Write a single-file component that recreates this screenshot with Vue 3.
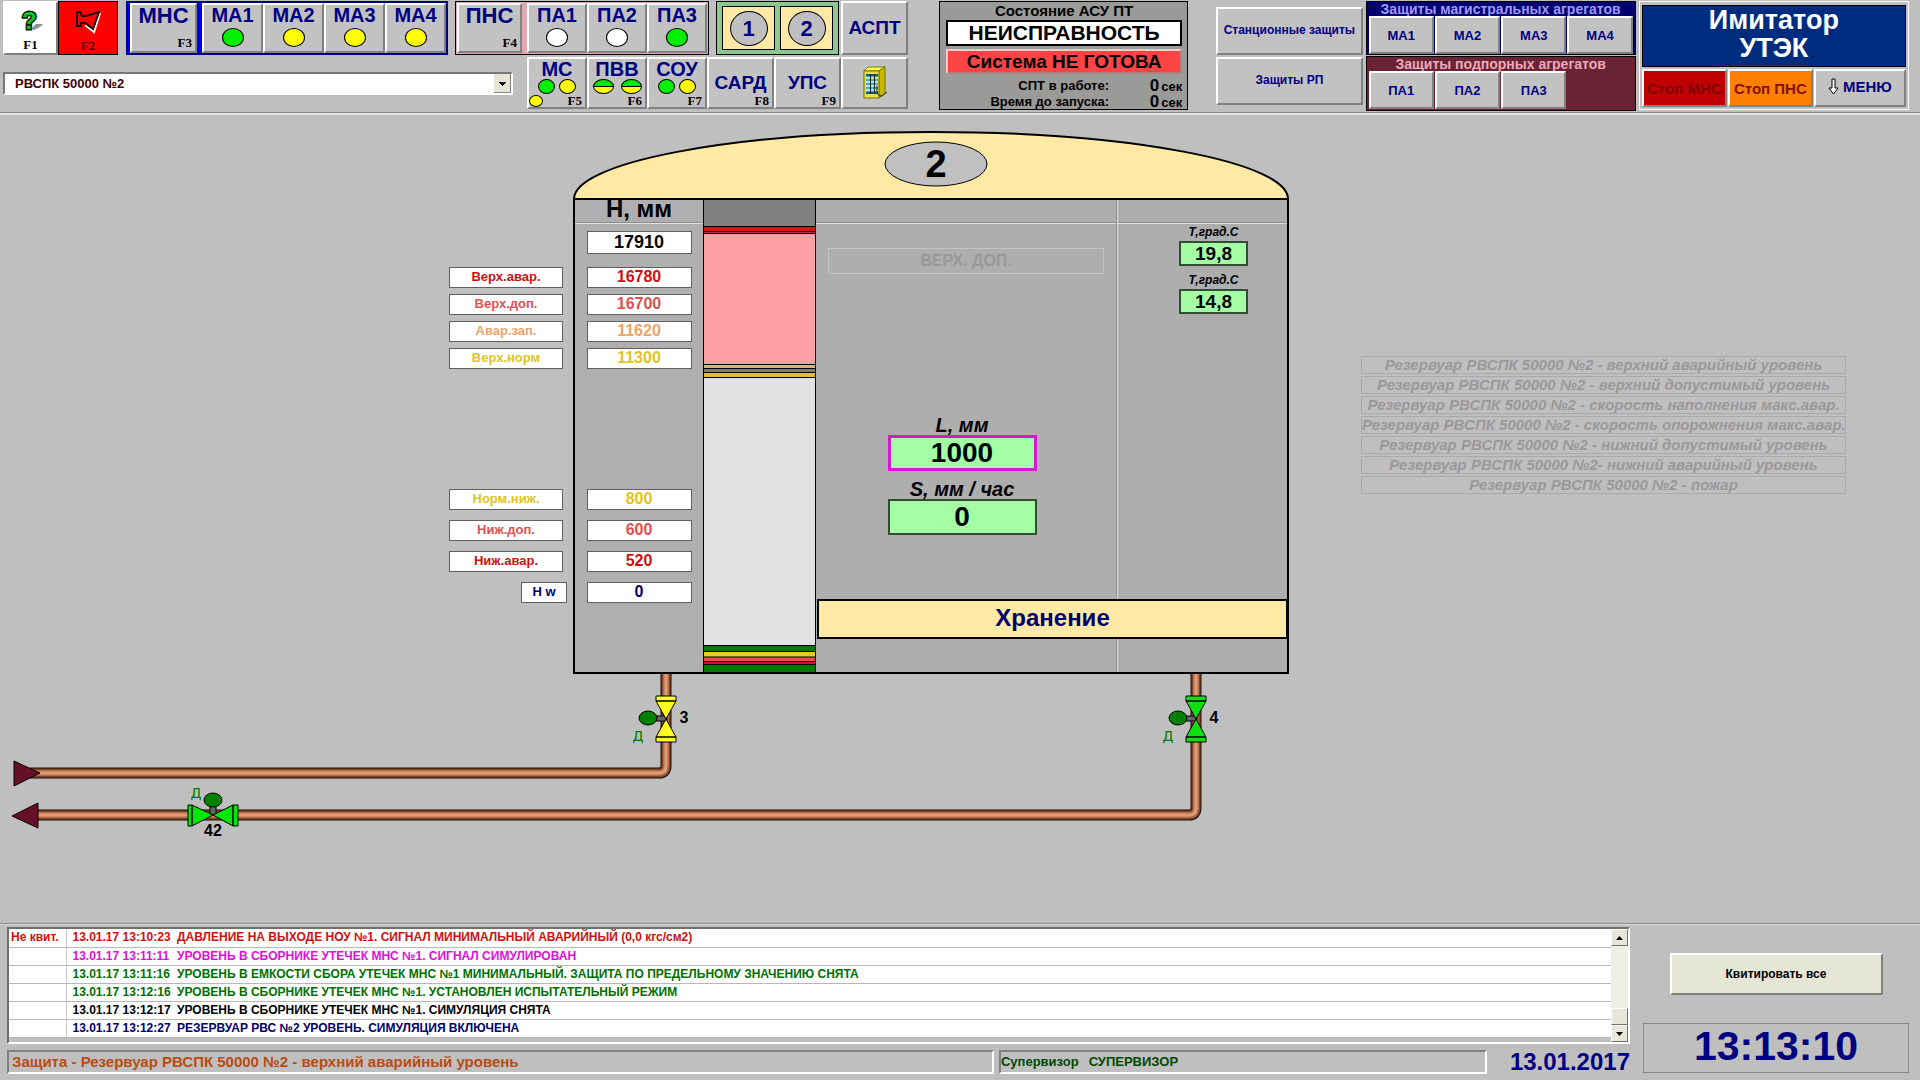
<script setup>
import { ref } from "vue";

const object = ref("РВСПК 50000 №2");

const mainUnits = [
  { name: "МА1", lamp: "green" },
  { name: "МА2", lamp: "yellow" },
  { name: "МА3", lamp: "yellow" },
  { name: "МА4", lamp: "yellow" },
];
const boostUnits = [
  { name: "ПА1", lamp: "white" },
  { name: "ПА2", lamp: "white" },
  { name: "ПА3", lamp: "green" },
];
const systems = [
  { name: "МС", key: "F5", lamps: ["green", "yellow"], extra: true },
  { name: "ПВВ", key: "F6", lamps: ["half", "half"] },
  { name: "СОУ", key: "F7", lamps: ["green", "yellow"] },
];

// level setpoints, upper and lower groups
const upper = [
  { label: "Верх.авар.", value: "16780", color: "red" },
  { label: "Верх.доп.", value: "16700", color: "coral" },
  { label: "Авар.зап.", value: "11620", color: "orange" },
  { label: "Верх.норм", value: "11300", color: "gold" },
];
const lower = [
  { label: "Норм.ниж.", value: "800", color: "gold" },
  { label: "Ниж.доп.", value: "600", color: "coral" },
  { label: "Ниж.авар.", value: "520", color: "red" },
  { label: "H w", value: "0", color: "navy", short: true },
];

const temps = ["19,8", "14,8"];

const alarms = [
  "Резервуар РВСПК 50000 №2 - верхний аварийный уровень",
  "Резервуар РВСПК 50000 №2 - верхний допустимый уровень",
  "Резервуар РВСПК 50000 №2 - скорость наполнения макс.авар.",
  "Резервуар РВСПК 50000 №2 - скорость опорожнения макс.авар.",
  "Резервуар РВСПК 50000 №2 - нижний допустимый уровень",
  "Резервуар РВСПК 50000 №2- нижний аварийный уровень",
  "Резервуар РВСПК 50000 №2 - пожар",
];

const log = [
  { ack: "Не квит.", time: "13.01.17 13:10:23", text: "ДАВЛЕНИЕ НА ВЫХОДЕ НОУ №1. СИГНАЛ МИНИМАЛЬНЫЙ АВАРИЙНЫЙ (0,0 кгс/см2)", color: "red" },
  { ack: "", time: "13.01.17 13:11:11", text: "УРОВЕНЬ В СБОРНИКЕ УТЕЧЕК МНС №1. СИГНАЛ СИМУЛИРОВАН", color: "magenta" },
  { ack: "", time: "13.01.17 13:11:16", text: "УРОВЕНЬ В ЕМКОСТИ СБОРА УТЕЧЕК МНС №1 МИНИМАЛЬНЫЙ. ЗАЩИТА ПО ПРЕДЕЛЬНОМУ ЗНАЧЕНИЮ СНЯТА", color: "green" },
  { ack: "", time: "13.01.17 13:12:16", text: "УРОВЕНЬ В СБОРНИКЕ УТЕЧЕК МНС №1. УСТАНОВЛЕН ИСПЫТАТЕЛЬНЫЙ РЕЖИМ", color: "green" },
  { ack: "", time: "13.01.17 13:12:17", text: "УРОВЕНЬ В СБОРНИКЕ УТЕЧЕК МНС №1. СИМУЛЯЦИЯ СНЯТА", color: "black" },
  { ack: "", time: "13.01.17 13:12:27", text: "РЕЗЕРВУАР РВС №2 УРОВЕНЬ. СИМУЛЯЦИЯ ВКЛЮЧЕНА", color: "navy" },
];

const pipes = ["M666 673V766Q666 773 659 773H30", "M1196 673V808Q1196 815 1189 815H38"];
// stacked strokes that give a pipe its round look
const layers = [
  { color: "#1c0c04", width: 11 },
  { color: "#7d4429", width: 9 },
  { color: "#b56f4b", width: 6 },
  { color: "#e09a74", width: 3 },
];
const tankValves = [
  { x: 666, color: "#ffff20", name: "3" },
  { x: 1196, color: "#10e010", name: "4" },
];
</script>

<template>
  <div class="screen">
    <header class="top">
      <div class="toolbar">
        <div class="row">
          <button class="btn help" aria-label="Справка F1">
            <svg width="26" height="26" viewBox="0 0 26 26">
              <path d="M13 22L18 17H25L22 20L16 23Z" fill="#909090" />
              <text x="4" y="22" class="question">?</text>
            </svg>
            <span class="fkey">F1</span>
          </button>
          <button class="horn" aria-label="Сирена F2">
            <svg width="30" height="28" viewBox="0 0 30 28">
              <path d="M27 7L21 26L12 19" fill="none" stroke="#fff" stroke-width="2" />
              <path d="M4 6H7L9 10H13L26 6L20 23L12 17H8V20H4Z" fill="#ff0000" stroke="#200000" stroke-width="2" />
            </svg>
            <span class="fkey">F2</span>
          </button>
          <div class="group blue">
            <button class="btn station">МНС<span class="key">F3</span></button>
            <button v-for="u in mainUnits" :key="u.name" class="btn unit">
              {{ u.name }}<span class="lamp" :class="u.lamp"></span>
            </button>
          </div>
          <div class="group pink">
            <button class="btn station">ПНС<span class="key">F4</span></button>
            <button v-for="u in boostUnits" :key="u.name" class="btn unit">
              {{ u.name }}<span class="lamp" :class="u.lamp"></span>
            </button>
          </div>
          <div class="group mint">
            <button v-for="n in 2" :key="n" class="tank-btn"><span>{{ n }}</span></button>
          </div>
          <button class="btn big">АСПТ</button>
        </div>
        <div class="row second">
          <select v-model="object" class="object" aria-label="Объект">
            <option>РВСПК 50000 №2</option>
          </select>
          <div class="systems">
            <button v-for="s in systems" :key="s.name" class="btn unit system">
              {{ s.name }}
              <span class="lamps" :class="{ wide: s.name === 'ПВВ' }">
                <span v-for="(l, i) in s.lamps" :key="i" class="lamp small" :class="l"></span>
              </span>
              <span v-if="s.extra" class="lamp tiny yellow"></span>
              <span class="key">{{ s.key }}</span>
            </button>
            <button class="btn big">САРД<span class="key">F8</span></button>
            <button class="btn big">УПС<span class="key">F9</span></button>
            <button class="btn big" aria-label="Шкаф">
              <svg width="26" height="34" viewBox="0 0 26 34">
                <path d="M2 5L6 1H23L17 5Z" fill="#ffff50" stroke="#777700" />
                <path d="M17 5L23 1V27L17 32Z" fill="#c8b800" stroke="#777700" />
                <rect x="2" y="5" width="15" height="27" fill="#e8e040" stroke="#777700" />
                <rect x="4" y="8" width="12" height="20" fill="#175a78" />
                <path d="M4 12H8M9 12H12M13 12H16M4 16H8M9 16H12M13 16H16M4 20H8M9 20H12M13 20H16M4 24H8M9 24H12M13 24H16" stroke="#a8e8f0" stroke-width="3" />
                <path d="M8.500 8V28M12.500 8V28" stroke="#222" />
                <path d="M15 20Q14 31 20 30L25 26" fill="none" stroke="#222" />
              </svg>
            </button>
          </div>
        </div>
      </div>

      <section class="fire">
        <h2>Состояние АСУ ПТ</h2>
        <div class="fault">НЕИСПРАВНОСТЬ</div>
        <div class="notready">Система НЕ ГОТОВА</div>
        <dl>
          <dt>СПТ в работе:</dt>
          <dd><b>0</b>сек</dd>
          <dt>Время до запуска:</dt>
          <dd><b>0</b>сек</dd>
        </dl>
      </section>

      <div class="protections">
        <button class="btn">Станционные защиты</button>
        <button class="btn">Защиты РП</button>
      </div>

      <div class="units">
        <section class="main-units">
          <h2>Защиты магистральных агрегатов</h2>
          <div class="unit-row">
            <button v-for="u in mainUnits" :key="u.name" class="btn">{{ u.name }}</button>
          </div>
        </section>
        <section class="boost-units">
          <h2>Защиты подпорных агрегатов</h2>
          <div class="unit-row">
            <button v-for="u in boostUnits" :key="u.name" class="btn">{{ u.name }}</button>
          </div>
        </section>
      </div>

      <div class="simulator">
        <h1>Имитатор<br />УТЭК</h1>
        <div class="stops">
          <button class="btn stop-mns">Стоп МНС</button>
          <button class="btn stop-pns">Стоп ПНС</button>
          <button class="btn menu">
            <svg width="11" height="17" viewBox="0 0 11 17">
              <path d="M4 1H7V10H10L5.500 16L1 10H4Z" fill="#fff" stroke="#000" />
            </svg>
            МЕНЮ
          </button>
        </div>
      </div>
    </header>

    <main class="mimic">
      <svg class="piping" width="1300" height="760" viewBox="0 115 1300 760">
        <g v-for="p in pipes" :key="p" fill="none">
          <path v-for="l in layers" :key="l.width" :d="p" :stroke="l.color" :stroke-width="l.width" />
        </g>
        <path d="M14 761L40 773L14 786Z M38 803L12 816L38 828Z" fill="#651028" stroke="#000" />
        <g v-for="v in tankValves" :key="v.name" :transform="`translate(${v.x} 718)`">
          <rect x="-10" y="-2" width="11" height="5" fill="#666" stroke="#000" />
          <path d="M-10 -17L0 1L10 -17Z M-10 19L0 1L10 19Z M-10 -22H10V-17H-10Z M-10 19H10V24H-10Z" :fill="v.color" stroke="#000" />
          <ellipse cx="-18" cy="0" rx="9" ry="7" fill="#008000" stroke="#000" />
          <text x="-28" y="23" class="mode">Д</text>
          <text x="18" y="5" class="tag">{{ v.name }}</text>
        </g>
        <g transform="translate(213 815)">
          <rect x="-3" y="-9" width="6" height="9" fill="#666" stroke="#000" />
          <path d="M-21 -10L0 0L-21 11Z M20 -10L0 0L20 11Z M-25 -10H-21V11H-25Z M20 -10H25V11H20Z" fill="#00e800" stroke="#000" />
          <ellipse cx="0" cy="-15" rx="9" ry="7" fill="#008000" stroke="#000" />
          <text x="-17" y="-17" class="mode">Д</text>
          <text x="0" y="21" class="tag">42</text>
        </g>
      </svg>

      <div class="limits">
        <div v-for="l in upper" :key="l.label" class="field" :class="l.color">{{ l.label }}</div>
        <div class="spacer"></div>
        <div v-for="l in lower" :key="l.label" class="field low" :class="[l.color, { short: l.short }]">{{ l.label }}</div>
      </div>

      <div class="tank">
        <svg class="dome" width="716" height="70" viewBox="0 0 716 70">
          <path d="M1 69A357 67 0 0 1 715 69Z" fill="#ffe9a4" stroke="#000" stroke-width="2" />
          <ellipse cx="363" cy="34" rx="51" ry="22" fill="#c0c0c0" stroke="#000" />
          <text x="363" y="47" text-anchor="middle">2</text>
        </svg>
        <div class="body">
          <div class="heights">
            <div class="cap">H, мм</div>
            <div class="field total">17910</div>
            <div v-for="l in upper" :key="l.label" class="field" :class="l.color">{{ l.value }}</div>
            <div class="spacer"></div>
            <div v-for="l in lower" :key="l.label" class="field low" :class="l.color">{{ l.value }}</div>
          </div>
          <svg class="level" width="113" height="472" viewBox="0 0 113 472">
            <rect width="113" height="472" fill="#e2e2e2" />
            <rect width="113" height="27" fill="#808080" />
            <rect y="26" width="113" height="6" fill="#d01818" />
            <rect y="32" width="113" height="2" fill="#a04040" />
            <rect y="34" width="113" height="130" fill="#ffa0a4" />
            <rect y="164" width="113" height="4" fill="#f0a878" />
            <rect y="168" width="113" height="4" fill="#7c7c6c" />
            <rect y="172" width="113" height="5" fill="#e4b848" />
            <rect y="445" width="113" height="6" fill="#0a780a" />
            <rect y="451" width="113" height="6" fill="#e4cc28" />
            <rect y="457" width="113" height="4" fill="#e45050" />
            <rect y="461" width="113" height="4" fill="#d01818" />
            <rect y="465" width="113" height="7" fill="#007a00" />
            <path d="M0 26.500H113M0 31.500H113M0 33.500H113M0 164.500H113M0 168.500H113M0 172.500H113M0 177.500H113M0 445.500H113M0 451.500H113M0 457H113M0 461.500H113M0 464.500H113M.5 0V472M112.500 0V472" stroke="#000" />
          </svg>
          <div class="readings">
            <div class="cap"></div>
            <div class="ghost">ВЕРХ. ДОП.</div>
            <div class="reading">
              <span>L, мм</span>
              <output class="selected">1000</output>
            </div>
            <div class="reading">
              <span>S, мм / час</span>
              <output>0</output>
            </div>
          </div>
          <div class="temps">
            <div class="cap"></div>
            <div v-for="t in temps" :key="t" class="temp">
              <span>Т,град.С</span>
              <output>{{ t }}</output>
            </div>
          </div>
          <div class="mode-bar">Хранение</div>
        </div>
      </div>

      <ul class="alarms">
        <li v-for="a in alarms" :key="a">{{ a }}</li>
      </ul>
    </main>

    <footer class="bottom">
      <div class="journal">
        <div class="log">
          <table>
            <tbody>
              <tr v-for="r in log" :key="r.time" :class="r.color">
                <td class="ack">{{ r.ack }}</td>
                <td class="time">{{ r.time }}</td>
                <td>{{ r.text }}</td>
              </tr>
            </tbody>
          </table>
          <div class="scroll">
            <button aria-label="Вверх"><svg width="7" height="4"><path d="M0 4L3.500 0L7 4Z" /></svg></button>
            <div class="thumb"></div>
            <button aria-label="Вниз"><svg width="7" height="4"><path d="M0 0H7L3.500 4Z" /></svg></button>
          </div>
        </div>
        <div class="status">
          <div class="cell protect">Защита - Резервуар РВСПК 50000 №2 - верхний аварийный уровень</div>
          <div class="cell user"><span>Супервизор</span><span>СУПЕРВИЗОР</span></div>
          <div class="date">13.01.2017</div>
        </div>
      </div>
      <div class="side">
        <button class="btn ack-all">Квитировать все</button>
        <div class="clock">13:13:10</div>
      </div>
    </footer>
  </div>
</template>

<style>
body {
  margin: 0;
  background: #c0bfc0;
}
</style>

<style scoped>
* {
  box-sizing: border-box;
}

.screen {
  display: flex;
  flex-direction: column;
  min-height: 100vh;
  background: #c0bfc0;
  font-family: "Liberation Sans", Arial, sans-serif;
  font-weight: bold;
  color: #000;
}

h1,
h2,
dl,
dd,
ul {
  margin: 0;
  padding: 0;
}

button,
select {
  font: inherit;
  margin: 0;
  padding: 0;
}

.btn {
  position: relative;
  display: flex;
  align-items: center;
  justify-content: center;
  border: 2px solid;
  border-color: #fff #808080 #808080 #fff;
  background: #c3c2c3;
  color: #000080;
}

/* header */
.top {
  display: flex;
  align-items: flex-start;
  height: 115px;
  padding: 1px 11px 0 3px;
  border-bottom: 2px solid #e4e4e4;
  box-shadow: inset 0 -1px #888;
}

.toolbar {
  flex: none;
  width: 905px;
  margin-right: 31px;
}

.row {
  display: flex;
  height: 54px;
}

.second {
  height: 52px;
  margin-top: 2px;
  justify-content: space-between;
  align-items: center;
}

.help,
.horn {
  display: flex;
  flex-direction: column;
  align-items: center;
  justify-content: space-between;
  padding: 4px 0 0;
  width: 55px;
  background: #fff;
  color: #000;
}

.horn {
  width: 60px;
  margin-right: 8px;
  border: 1px solid #000;
  background: #ff0000;
  color: #500000;
}

.question {
  font-size: 24px;
  font-weight: bold;
  fill: #10c030;
  stroke: #002000;
  stroke-width: 3px;
  paint-order: stroke;
}

.fkey,
.key {
  font-family: "Liberation Serif", serif;
  font-size: 13px;
  line-height: 16px;
}

.key {
  position: absolute;
  right: 3px;
  bottom: 0;
  color: #000;
}

.second .key {
  bottom: -2px;
}

.group {
  display: flex;
  padding: 1px;
  border: 1px solid #000;
}

.blue {
  width: 322px;
  margin-right: 7px;
  border: 2px solid #000080;
  padding: 0 0 0 2px;
  background: #0000e8;
}

.pink {
  width: 254px;
  margin-right: 7px;
  background: #e0a8b0;
}

.mint {
  width: 123px;
  margin-right: 2px;
  padding: 4px 5px;
  justify-content: space-between;
  background: #8cc890;
}

.station {
  width: 67px;
  margin-right: 5px;
  padding-bottom: 24px;
  font-size: 22px;
}

.pink .station {
  width: 65px;
}

.unit {
  flex: 1;
  flex-direction: column;
  justify-content: flex-start;
  gap: 2px;
  font-size: 20px;
  line-height: 21px;
}

.system {
  gap: 0;
  line-height: 20px;
}

.lamp {
  width: 22px;
  height: 19px;
  border: 1px solid #000;
  border-radius: 50%;
}

.lamp.small {
  width: 17px;
  height: 15px;
}

.lamp.tiny {
  position: absolute;
  left: 0;
  bottom: 0;
  width: 14px;
  height: 12px;
}

.lamp.green {
  background: #00f000;
}

.lamp.yellow {
  background: #ffff00;
}

.lamp.white {
  background: #fff;
}

.lamp.half {
  width: 21px;
  background: linear-gradient(#00e800 45%, #000 45%, #000 52%, #ffff00 52%);
}

.lamps {
  display: flex;
  gap: 4px;
}

.lamps.wide {
  gap: 7px;
}

.tank-btn {
  display: flex;
  align-items: center;
  justify-content: center;
  width: 53px;
  border: 1px solid #000;
  background: #ffe9a4;
  color: #000080;
  font-size: 22px;
}

.tank-btn span {
  width: 38px;
  height: 35px;
  line-height: 33px;
  border: 1px solid #000;
  border-radius: 50%;
  background: #c0bfc0;
}

.big {
  flex: none;
  width: 67px;
  font-size: 19px;
}

.object {
  flex: 1;
  height: 23px;
  margin: 0 14px 0 0;
  padding-left: 10px;
  appearance: none;
  border: 2px solid;
  border-color: #777 #fff #fff #777;
  border-radius: 0;
  color: #400000;
  font-size: 13px;
  background:
    linear-gradient(#000, #000) right 5px top 8px / 7px 1px no-repeat,
    linear-gradient(#000, #000) right 6px top 9px / 5px 1px no-repeat,
    linear-gradient(#000, #000) right 7px top 10px / 3px 1px no-repeat,
    linear-gradient(#000, #000) right 8px top 11px / 1px 1px no-repeat,
    linear-gradient(#808080, #808080) right / 1px 100% no-repeat,
    linear-gradient(#808080, #808080) right bottom / 17px 1px no-repeat,
    linear-gradient(#e6e4d4, #e6e4d4) right / 17px 100% no-repeat,
    #fff;
}

.systems {
  display: flex;
  align-self: stretch;
  width: 381px;
}

.fire {
  flex: 1 1 249px;
  height: 109px;
  margin-right: 28px;
  padding: 0 5px 0 6px;
  border: 1px solid #000;
  background: #9a9a98;
  text-align: center;
}

.fire h2 {
  font-size: 15px;
  line-height: 18px;
}

.fault {
  border: 2px solid #000;
  background: #fff;
  font-size: 21px;
  line-height: 22px;
}

.notready {
  margin-top: 3px;
  border: 2px solid;
  border-color: #ffc8c8 #b08080 #b08080 #ffc8c8;
  background: #ff4444;
  font-size: 19px;
  line-height: 21px;
}

dl {
  display: grid;
  grid-template-columns: 163px 1fr;
  margin-top: 4px;
  font-size: 13px;
  line-height: 15px;
  text-align: right;
}

dd b {
  margin-right: 2px;
  font-size: 17px;
}

.protections {
  display: flex;
  flex-direction: column;
  gap: 2px;
  flex: 1 1 146px;
  margin: 6px 3px 0 0;
}

.protections .btn {
  height: 48px;
  padding-bottom: 2px;
  font-size: 12px;
}

.units {
  flex: 1 1 270px;
  margin-right: 3px;
}

.units section {
  height: 54px;
  padding: 0 2px;
  border: 1px solid #000;
}

.units h2 {
  font-size: 14px;
  line-height: 14px;
  text-align: center;
}

.main-units {
  background: #000070;
  color: #a098ff;
}

.units .boost-units {
  height: 55px;
  margin-top: 1px;
  background: #682434;
  color: #f0a8b8;
}

.unit-row {
  display: grid;
  grid-template-columns: repeat(4, 1fr);
  gap: 1px;
}

.unit-row .btn {
  height: 38px;
  font-size: 13px;
}

.simulator {
  flex: 1 1 270px;
  height: 109px;
  padding: 3px 2px 2px;
  border: 1px solid #fff;
}

.simulator h1 {
  padding: 0 0 4px;
  border: 1px solid #000;
  background: #002c80;
  color: #fff;
  font-size: 27px;
  line-height: 28px;
  text-align: center;
}

.stops {
  display: flex;
  gap: 1px;
  margin-top: 2px;
  font-size: 15px;
}

.stops .btn {
  flex: 1 1 85px;
  height: 38px;
  white-space: nowrap;
}

.stops .stop-mns {
  background: #c00000;
  color: #800000;
}

.stops .stop-pns {
  background: #ff8000;
  color: #801000;
}

.stops .menu {
  flex-basis: 92px;
  gap: 4px;
  padding-bottom: 4px;
}

/* mimic */
.mimic {
  position: relative;
  flex: 1;
  display: flex;
  align-items: flex-start;
  padding: 0 74px 0 449px;
}

.piping {
  position: absolute;
  left: 0;
  top: 0;
}

.mode {
  font-family: "DejaVu Sans", sans-serif;
  font-size: 14px;
  font-weight: normal;
  fill: #007a00;
  text-anchor: middle;
}

.tag {
  font-size: 16px;
  text-anchor: middle;
}

.limits {
  position: relative;
  flex: none;
  display: flex;
  flex-direction: column;
  width: 118px;
  padding-top: 152px;
}

.field {
  width: 114px;
  height: 21px;
  margin-bottom: 6px;
  border: 1px solid #606060;
  background: #fff;
  font-size: 13px;
  line-height: 18px;
  text-align: center;
}

.field.low {
  margin-bottom: 10px;
}

.field.short {
  width: 46px;
  align-self: flex-end;
}

.spacer {
  height: 114px;
}

.red {
  color: #d01010;
}

.coral {
  color: #e05050;
}

.orange {
  color: #eca468;
}

.gold {
  color: #e0c420;
}

.navy {
  color: #000070;
}

.magenta {
  color: #e010d8;
}

.green {
  color: #007000;
}

.black {
  color: #000;
}

.tank {
  position: relative;
  flex: none;
  width: 716px;
  margin: 15px 0 0 6px;
}

.dome {
  display: block;
}

.dome text {
  font-size: 38px;
}

.body {
  display: grid;
  grid-template-columns: 128px 113px 1fr 171px;
  grid-template-rows: 399px 40px 33px;
  border: 2px solid #000;
  border-top: 0;
  background: #aeaeae;
}

.body > div,
.level {
  grid-row: 1 / 4;
}

.cap {
  flex: none;
  align-self: stretch;
  height: 24px;
  border-bottom: 2px groove #e0e0e0;
  font-size: 24px;
  line-height: 18px;
  text-align: center;
}

.heights {
  display: flex;
  flex-direction: column;
  align-items: center;
  background: #b0aeb0;
}

.heights .field {
  flex: none;
  width: 105px;
  font-size: 16px;
}

.heights .total {
  margin: 7px 0 13px;
  height: 23px;
  font-size: 18px;
  line-height: 20px;
}

.readings {
  display: flex;
  flex-direction: column;
  align-items: center;
}

.ghost {
  align-self: stretch;
  height: 26px;
  margin: 24px 12px 141px;
  border: 1px solid #c4c4c4;
  color: #989898;
  font-size: 16px;
  line-height: 24px;
  text-align: center;
}

.reading {
  display: flex;
  flex-direction: column;
  align-items: center;
  margin: 0 8px 8px 0;
  font-size: 20px;
  font-style: italic;
  line-height: 20px;
}

output {
  border: 2px solid #344c34;
  background: #a4ffa4;
  font-style: normal;
  text-align: center;
}

.reading output {
  width: 149px;
  height: 36px;
  font-size: 28px;
  line-height: 32px;
}

.reading .selected {
  border: 3px solid #d818d0;
  line-height: 30px;
}

.temps {
  display: flex;
  flex-direction: column;
  border-left: 2px groove #e0e0e0;
}

.temp {
  display: flex;
  flex-direction: column;
  align-items: center;
  width: 69px;
  margin: 0 0 6px 61px;
  font-size: 12px;
  font-style: italic;
  line-height: 17px;
}

.temp output {
  width: 69px;
  height: 25px;
  font-size: 19px;
  line-height: 21px;
}

.body > .mode-bar {
  grid-column: 3 / 5;
  grid-row: 2;
  margin-left: 1px;
  border: 2px solid #000;
  border-right-width: 1px;
  background: #ffe9a4;
  color: #000070;
  font-size: 24px;
  line-height: 34px;
  text-align: center;
}

.body .heights {
  grid-column: 1;
}

.body .level {
  grid-column: 2;
}

.body .readings {
  grid-column: 3;
}

.body .temps {
  grid-column: 4;
}

.alarms {
  width: 485px;
  margin: 241px 0 0 auto;
  list-style: none;
  color: #999;
  font-size: 15px;
  font-style: italic;
  line-height: 16px;
  text-align: center;
  white-space: nowrap;
}

.alarms li {
  height: 18px;
  margin-bottom: 2px;
  border: 1px solid #aaa;
}

/* footer */
.bottom {
  display: flex;
  height: 157px;
  border-top: 2px groove #ddd;
  padding: 2px 11px 0 7px;
}

.journal {
  flex: 1;
}

.log {
  display: flex;
  height: 117px;
  border: 2px solid;
  border-color: #707068 #fff #fff #707068;
}

table {
  flex: 1;
  align-self: flex-start;
  border-collapse: collapse;
  background: #fff;
  font-size: 12px;
  line-height: 17px;
}

td {
  height: 18px;
  padding: 0;
  border-bottom: 1px solid #b8b8b8;
  white-space: nowrap;
}

.ack {
  width: 57px;
  padding-left: 2px;
  border-right: 1px solid #c8c8c8;
}

.time {
  width: 111px;
  padding-left: 6px;
}

.scroll {
  display: flex;
  flex-direction: column;
  width: 17px;
  background: #f0efe6;
}

.scroll button,
.thumb {
  display: flex;
  align-items: center;
  justify-content: center;
  height: 17px;
  border: 1px solid;
  border-color: #fff #707068 #707068 #fff;
  background: #e8e6d8;
}

.thumb {
  margin-top: auto;
}

.status {
  display: flex;
  align-items: center;
  height: 24px;
  margin-top: 6px;
}

.cell {
  height: 24px;
  border: 2px solid;
  border-color: #808080 #fff #fff #808080;
  line-height: 20px;
  white-space: nowrap;
}

.protect {
  flex: 988;
  margin-right: 5px;
  padding-left: 3px;
  color: #b84c10;
  font-size: 15px;
}

.user {
  flex: 488;
  display: flex;
  gap: 10px;
  color: #004800;
  font-size: 13px;
}

.date {
  width: 143px;
  color: #000080;
  font-size: 24px;
  text-align: right;
}

.side {
  width: 266px;
  margin-left: 13px;
}

.ack-all {
  width: 213px;
  height: 42px;
  margin: 26px auto 28px;
  background: #e6e6d6;
  color: #000;
  font-size: 12px;
}

.clock {
  height: 50px;
  border: 1px solid #888;
  color: #000080;
  font-size: 41px;
  line-height: 44px;
  text-align: center;
}
</style>
